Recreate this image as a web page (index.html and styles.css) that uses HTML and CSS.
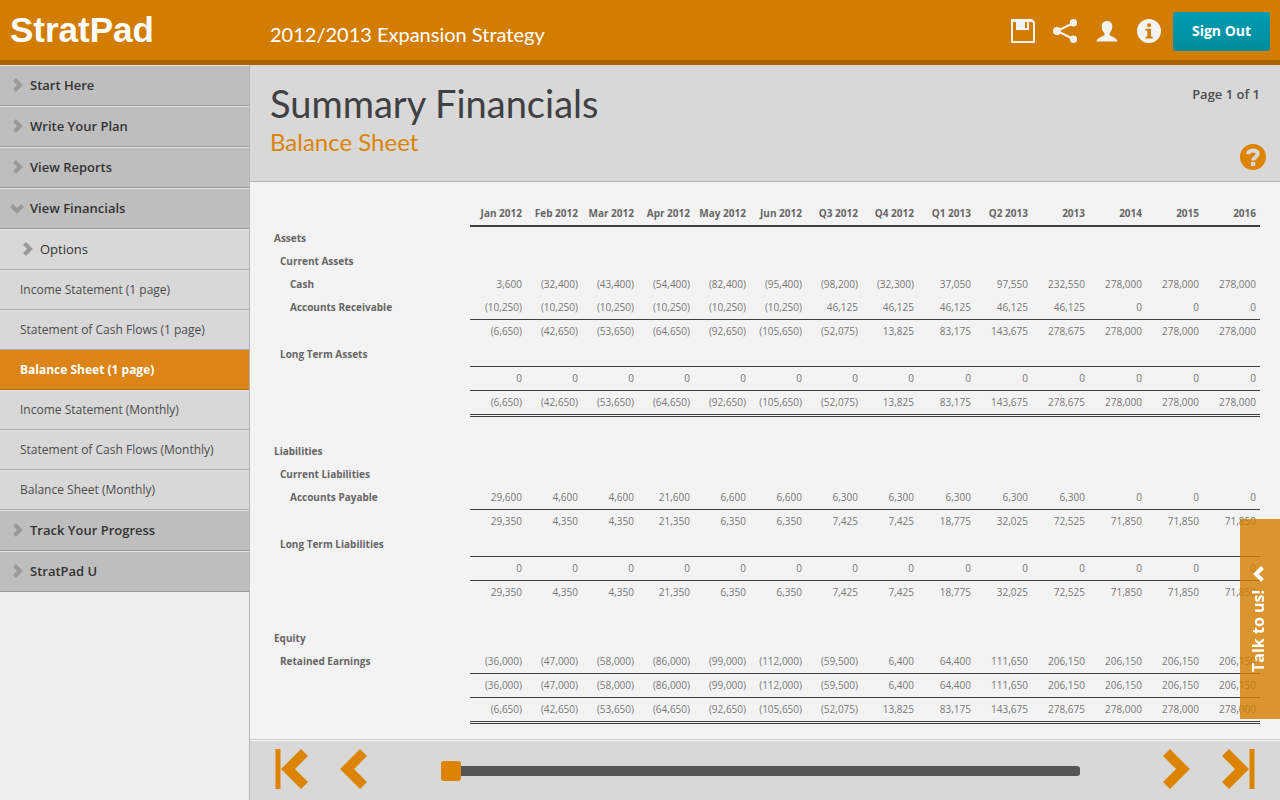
FILE: index.html
```html
<!DOCTYPE html>
<html lang="en">
<head>
<meta charset="utf-8">
<title>StratPad – Balance Sheet</title>
<link rel="stylesheet" href="styles.css">
</head>
<body>
<svg class="sprite" aria-hidden="true">
  <symbol id="chevron" viewBox="0 0 10 14"><path d="M2.500 1.500 8 7l-5.500 5.500" fill="none" stroke="currentColor" stroke-width="4"/></symbol>
  <symbol id="arrow" viewBox="0 0 27 40"><path d="M7 0 27 20 7 40 0 33 13 20 0 7z" fill="currentColor"/></symbol>
</svg>
<header class="topbar">
  <a class="logo" href="#">StratPad</a>
  <p class="plan-name">2012/2013 Expansion Strategy</p>
  <div class="tools">
    <button class="tool" aria-label="Save"><svg viewBox="0 0 24 24"><path fill-rule="evenodd" fill="currentColor" d="M0 0h21l3 3v21H0zM2 3v19h20V4l-1-1h-3v8H5V3zM14 3v6h2V3z"/></svg></button>
    <button class="tool" aria-label="Share"><svg viewBox="0 0 24 24"><path d="M20.500 4 4 12l16.500 8" fill="none" stroke="currentColor" stroke-width="2"/><g fill="currentColor"><circle cx="20.500" cy="3.700" r="3.700"/><circle cx="4" cy="12" r="4"/><circle cx="20.500" cy="20.300" r="3.700"/></g></svg></button>
    <button class="tool" aria-label="Account"><svg viewBox="0 0 24 24"><path fill="currentColor" d="M12 2c3.500 0 5.300 2.300 5.300 5.300 0 3-1.300 5.700-2.800 7.200v1.700c3.200 1.500 7.500 2.800 8 6.300h-21c.5-3.500 4.800-4.800 8-6.300v-1.700C8 13 6.700 10.300 6.700 7.300 6.700 4.300 8.500 2 12 2z"/></svg></button>
    <button class="tool" aria-label="Information"><svg viewBox="0 0 24 24"><path fill-rule="evenodd" fill="currentColor" d="M12 0a12 12 0 1 0 0 24 12 12 0 0 0 0-24zM10.200 4.500h3.800v3.200h-3.800zM8.500 9.700H14v7.800h1.700v2H8.500v-2h1.800v-5.800H8.500z"/></svg></button>
    <button class="sign-out">Sign Out</button>
  </div>
</header>
<div class="workspace">
  <nav class="sidebar" aria-label="Sections">
    <a class="section" href="#"><svg class="chevron"><use href="#chevron"/></svg>Start Here</a>
    <a class="section" href="#"><svg class="chevron"><use href="#chevron"/></svg>Write Your Plan</a>
    <a class="section" href="#"><svg class="chevron"><use href="#chevron"/></svg>View Reports</a>
    <a class="section" href="#"><svg class="chevron open"><use href="#chevron"/></svg>View Financials</a>
    <a class="section options" href="#"><svg class="chevron"><use href="#chevron"/></svg>Options</a>
    <a class="page" href="#">Income Statement (1 page)</a>
    <a class="page" href="#">Statement of Cash Flows (1 page)</a>
    <a class="page current" href="#" aria-current="page">Balance Sheet (1 page)</a>
    <a class="page" href="#">Income Statement (Monthly)</a>
    <a class="page" href="#">Statement of Cash Flows (Monthly)</a>
    <a class="page" href="#">Balance Sheet (Monthly)</a>
    <a class="section" href="#"><svg class="chevron"><use href="#chevron"/></svg>Track Your Progress</a>
    <a class="section" href="#"><svg class="chevron"><use href="#chevron"/></svg>StratPad U</a>
  </nav>
  <main class="content">
    <div class="page-head">
      <div>
        <h1>Summary Financials</h1>
        <h2>Balance Sheet</h2>
      </div>
      <div class="page-side">
        <p class="page-count">Page 1 of 1</p>
        <button class="help" aria-label="Help"><svg viewBox="0 0 26 26"><circle cx="13" cy="13" r="13" fill="currentColor"/><path d="M8 10.200C8.300 7.800 10 6.400 13 6.400c3 0 4.700 1.300 4.700 3.600 0 3.200-4.500 2.900-4.500 6.500" fill="none" stroke="#d8d8d8" stroke-width="4"/><path d="M11 18h4.300v4H11z" fill="#d8d8d8"/></svg></button>
      </div>
    </div>
    <div class="report">
      <table>
        <colgroup><col class="label-col"><col class="period-col" span="8"><col span="6"></colgroup>
        <thead>
          <tr><td></td><th scope="col">Jan 2012</th><th scope="col">Feb 2012</th><th scope="col">Mar 2012</th><th scope="col">Apr 2012</th><th scope="col">May 2012</th><th scope="col">Jun 2012</th><th scope="col">Q3 2012</th><th scope="col">Q4 2012</th><th scope="col">Q1 2013</th><th scope="col">Q2 2013</th><th scope="col">2013</th><th scope="col">2014</th><th scope="col">2015</th><th scope="col">2016</th></tr>
        </thead>
        <tbody>
          <tr><th scope="row">Assets</th><td colspan="14"></td></tr>
          <tr><th scope="row" class="level-2">Current Assets</th><td colspan="14"></td></tr>
          <tr><th scope="row" class="level-3">Cash</th><td>3,600</td><td>(32,400)</td><td>(43,400)</td><td>(54,400)</td><td>(82,400)</td><td>(95,400)</td><td>(98,200)</td><td>(32,300)</td><td>37,050</td><td>97,550</td><td>232,550</td><td>278,000</td><td>278,000</td><td>278,000</td></tr>
          <tr><th scope="row" class="level-3">Accounts Receivable</th><td>(10,250)</td><td>(10,250)</td><td>(10,250)</td><td>(10,250)</td><td>(10,250)</td><td>(10,250)</td><td>46,125</td><td>46,125</td><td>46,125</td><td>46,125</td><td>46,125</td><td>0</td><td>0</td><td>0</td></tr>
          <tr class="total"><th></th><td>(6,650)</td><td>(42,650)</td><td>(53,650)</td><td>(64,650)</td><td>(92,650)</td><td>(105,650)</td><td>(52,075)</td><td>13,825</td><td>83,175</td><td>143,675</td><td>278,675</td><td>278,000</td><td>278,000</td><td>278,000</td></tr>
          <tr><th scope="row" class="level-2">Long Term Assets</th><td colspan="14"></td></tr>
          <tr class="total"><th></th><td>0</td><td>0</td><td>0</td><td>0</td><td>0</td><td>0</td><td>0</td><td>0</td><td>0</td><td>0</td><td>0</td><td>0</td><td>0</td><td>0</td></tr>
          <tr class="total grand"><th></th><td>(6,650)</td><td>(42,650)</td><td>(53,650)</td><td>(64,650)</td><td>(92,650)</td><td>(105,650)</td><td>(52,075)</td><td>13,825</td><td>83,175</td><td>143,675</td><td>278,675</td><td>278,000</td><td>278,000</td><td>278,000</td></tr>
        </tbody>
        <tbody>
          <tr class="spacer"><td colspan="15"></td></tr>
          <tr><th scope="row">Liabilities</th><td colspan="14"></td></tr>
          <tr><th scope="row" class="level-2">Current Liabilities</th><td colspan="14"></td></tr>
          <tr><th scope="row" class="level-3">Accounts Payable</th><td>29,600</td><td>4,600</td><td>4,600</td><td>21,600</td><td>6,600</td><td>6,600</td><td>6,300</td><td>6,300</td><td>6,300</td><td>6,300</td><td>6,300</td><td>0</td><td>0</td><td>0</td></tr>
          <tr class="total"><th></th><td>29,350</td><td>4,350</td><td>4,350</td><td>21,350</td><td>6,350</td><td>6,350</td><td>7,425</td><td>7,425</td><td>18,775</td><td>32,025</td><td>72,525</td><td>71,850</td><td>71,850</td><td>71,850</td></tr>
          <tr><th scope="row" class="level-2">Long Term Liabilities</th><td colspan="14"></td></tr>
          <tr class="total"><th></th><td>0</td><td>0</td><td>0</td><td>0</td><td>0</td><td>0</td><td>0</td><td>0</td><td>0</td><td>0</td><td>0</td><td>0</td><td>0</td><td>0</td></tr>
          <tr class="total"><th></th><td>29,350</td><td>4,350</td><td>4,350</td><td>21,350</td><td>6,350</td><td>6,350</td><td>7,425</td><td>7,425</td><td>18,775</td><td>32,025</td><td>72,525</td><td>71,850</td><td>71,850</td><td>71,850</td></tr>
        </tbody>
        <tbody>
          <tr class="spacer"><td colspan="15"></td></tr>
          <tr><th scope="row">Equity</th><td colspan="14"></td></tr>
          <tr><th scope="row" class="level-2">Retained Earnings</th><td>(36,000)</td><td>(47,000)</td><td>(58,000)</td><td>(86,000)</td><td>(99,000)</td><td>(112,000)</td><td>(59,500)</td><td>6,400</td><td>64,400</td><td>111,650</td><td>206,150</td><td>206,150</td><td>206,150</td><td>206,150</td></tr>
          <tr class="total"><th></th><td>(36,000)</td><td>(47,000)</td><td>(58,000)</td><td>(86,000)</td><td>(99,000)</td><td>(112,000)</td><td>(59,500)</td><td>6,400</td><td>64,400</td><td>111,650</td><td>206,150</td><td>206,150</td><td>206,150</td><td>206,150</td></tr>
          <tr class="total grand"><th></th><td>(6,650)</td><td>(42,650)</td><td>(53,650)</td><td>(64,650)</td><td>(92,650)</td><td>(105,650)</td><td>(52,075)</td><td>13,825</td><td>83,175</td><td>143,675</td><td>278,675</td><td>278,000</td><td>278,000</td><td>278,000</td></tr>
        </tbody>
      </table>
    </div>
    <footer class="pager">
      <div class="pager-group">
        <button class="nav-button" aria-label="First page"><svg class="arrow-end flip" viewBox="0 0 33 40"><use href="#arrow" width="27" height="40"/><path d="M27.500 0h5v40h-5z" fill="currentColor"/></svg></button>
        <button class="nav-button" aria-label="Previous page"><svg class="arrow flip"><use href="#arrow"/></svg></button>
      </div>
      <input class="page-slider" type="range" min="0" max="1" value="0" aria-label="Page">
      <div class="pager-group">
        <button class="nav-button" aria-label="Next page"><svg class="arrow"><use href="#arrow"/></svg></button>
        <button class="nav-button" aria-label="Last page"><svg class="arrow-end" viewBox="0 0 33 40"><use href="#arrow" width="27" height="40"/><path d="M27.500 0h5v40h-5z" fill="currentColor"/></svg></button>
      </div>
    </footer>
  </main>
</div>
<button class="talk"><span>Talk to us!</span><svg class="talk-chevron" viewBox="0 0 11 16"><path d="M9.500 1.500 3 8l6.500 6.500" fill="none" stroke="currentColor" stroke-width="4"/></svg></button>
</body>
</html>
```

FILE: styles.css
```css
* { box-sizing: border-box; }

body {
  margin: 0;
  height: 100vh;
  display: flex;
  flex-direction: column;
  font-family: "Open Sans", "Noto Sans", sans-serif;
  color: #404042;
  background: #f3f3f3;
}

h1, h2, p { margin: 0; }
a { color: inherit; text-decoration: none; }
button { padding: 0; border: 0; background: none; font: inherit; color: inherit; cursor: pointer; }
svg { display: block; }
.sprite { position: absolute; width: 0; height: 0; }

/* Top bar */
.topbar {
  flex: none;
  display: flex;
  align-items: center;
  padding: 0 10px;
  height: 65px;
  border-bottom: 5px solid #ab6500;
  background: #d37d00;
  color: #fff;
}
.logo {
  flex: 0 0 260px;
  font: bold 35px/40px "Liberation Sans", Arial, sans-serif;
}
.plan-name {
  flex: 1;
  padding-top: 8px;
  font: 20px/24px Lato, sans-serif;
}
.tools { display: flex; align-items: center; gap: 18px; padding-top: 2px; }
.tool { color: #f3f3f3; }
.tool svg { width: 24px; height: 24px; }
.sign-out {
  margin-left: -6px;
  width: 97px;
  height: 39px;
  border-radius: 3px;
  background: linear-gradient(#009cb0, #008c9e);
  padding-bottom: 2px;
  font-size: 14px;
  font-weight: 700;
  color: #fff;
}

.workspace { flex: 1; display: flex; min-height: 0; }

/* Sidebar */
.sidebar {
  flex: 0 0 250px;
  border-right: 1px solid #b5b5b5;
  background: #eee;
}
.section, .page {
  display: flex;
  align-items: center;
  border-top: 1px solid #e4e4e4;
  border-bottom: 1px solid #a9a9a9;
}
.section {
  gap: 7px;
  height: 41px;
  padding: 0 11px 2px;
  background: #bebebe;
  border-bottom-color: #999;
  font-size: 13px;
  font-weight: 600;
  color: #333;
}
.options { padding-left: 21px; background: #d8d8d8; border-bottom-color: #a9a9a9; font-weight: 400; }
.chevron { width: 12px; height: 14px; color: #999; }
.chevron.open { transform: rotate(90deg); }
.page {
  height: 40px;
  padding: 0 20px 2px;
  background: #d8d8d8;
  font-size: 12px;
  color: #4c4c4c;
}
.page.current {
  border-color: #db8418 #db8418 #b86b0c;
  background: #db8418;
  font-weight: 700;
  color: #fff;
}

/* Content */
.content { flex: 1; display: flex; flex-direction: column; min-width: 0; }
.page-head {
  flex: none;
  display: flex;
  justify-content: space-between;
  height: 117px;
  padding: 16px 20px 0;
  border-bottom: 1px solid #b5b5b5;
  background: #d8d8d8;
}
h1 { margin-bottom: 2px; font: 38px/44px Lato, sans-serif; }
h2 { font: 24px/30px Lato, sans-serif; color: #dc8400; }
.page-side { display: flex; flex-direction: column; align-items: flex-end; padding-top: 4px; gap: 40px; }
.page-count { font-size: 13px; line-height: 19px; font-weight: 600; color: #4c4c4c; }
.help { margin-right: -6px; color: #dc8400; }
.help svg { width: 26px; height: 26px; }

.report { flex: 1; min-height: 0; overflow: hidden; padding: 20px 20px 0; }
table {
  width: 100%;
  table-layout: fixed;
  border-collapse: separate;
  border-spacing: 0;
  font-size: 10px;
  line-height: 23px;
  color: #777;
}
.label-col { width: 200px; }
.period-col { width: 56px; }
th, td { height: 23px; padding: 0 4px; text-align: right; white-space: nowrap; }
th { font-weight: 700; color: #666; }
tbody th { text-align: left; }
thead th { padding-left: 0; border-bottom: 2px solid #404042; }
tbody .level-2 { padding-left: 10px; }
tbody .level-3 { padding-left: 20px; }
.total td { border-top: 1px solid #404042; }
.grand td { border-bottom: 3px double #404042; }

/* Pager */
.pager {
  flex: none;
  display: flex;
  align-items: center;
  justify-content: space-between;
  height: 61px;
  padding: 0 25px 2px;
  border-top: 1px solid #ccc;
  box-shadow: inset 0 1px #f7f7f7;
  background: #d8d8d8;
}
.pager-group { display: flex; gap: 32px; color: #dc8400; }
.arrow { width: 27px; height: 40px; }
.arrow-end { width: 33px; height: 40px; }
.flip { transform: scaleX(-1); }
.page-slider {
  -webkit-appearance: none;
  appearance: none;
  flex: 1;
  height: 20px;
  margin: 4px 83px 0 74px;
  background: none;
}
.page-slider::-webkit-slider-runnable-track { height: 10px; border-radius: 3px; background: #555; }
.page-slider::-webkit-slider-thumb {
  -webkit-appearance: none;
  width: 20px;
  height: 20px;
  margin-top: -5px;
  border-radius: 3px;
  background: #dc8400;
}

/* Feedback tab */
.talk {
  position: fixed;
  right: 0;
  bottom: 81px;
  display: flex;
  flex-direction: column-reverse;
  align-items: center;
  justify-content: center;
  gap: 8px;
  width: 40px;
  height: 200px;
  padding-right: 4px;
  background: rgba(211, 125, 0, .8);
  font-size: 16px;
  font-weight: 700;
  color: #fff;
}
.talk span { writing-mode: vertical-rl; transform: rotate(180deg); }
.talk-chevron { width: 11px; height: 16px; }
```
